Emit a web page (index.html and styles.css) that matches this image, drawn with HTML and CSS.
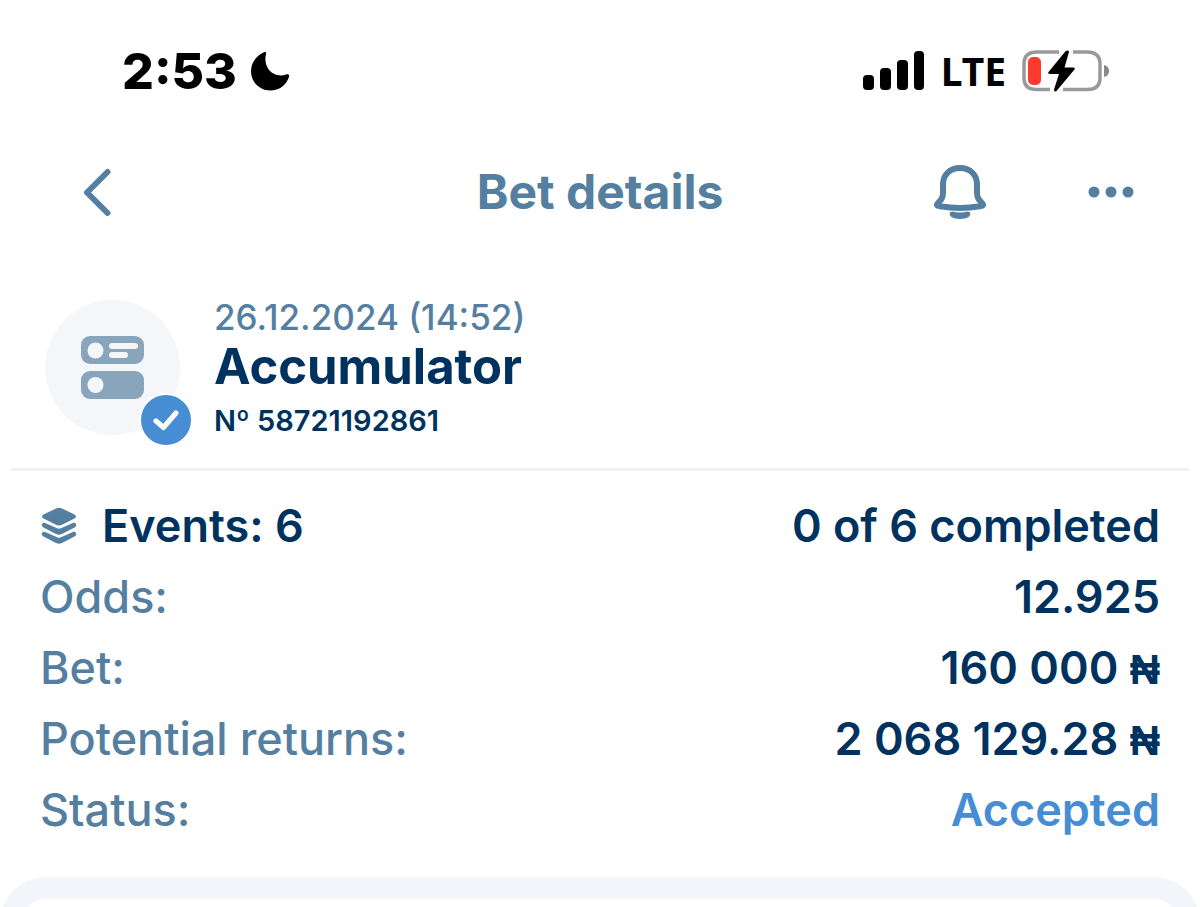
FILE: index.html
```html
<!DOCTYPE html>
<html lang="en">
<head>
<meta charset="utf-8">
<meta name="viewport" content="width=device-width, initial-scale=1">
<title>Bet details</title>
<link rel="stylesheet" href="styles.css">
</head>
<body>
<div class="status-bar">
  <div class="status-left">
    <span class="clock">2:53</span>
    <svg class="moon" width="40" height="40" viewBox="0 0 40 40" aria-hidden="true"><path d="M13.500 1.500C15.500 .5 16.500 1 16 3C14 11 17 19 23.500 22.500C28 25 32.500 24.800 36 23.500C38.200 22.700 39.700 23.800 39 26C36 34.500 29 39.500 20.500 39.500C9.500 39.500 1 31 1 20.500C1 12 6 5 13.500 1.500Z"/></svg>
  </div>
  <div class="status-right">
    <svg width="62" height="40" viewBox="0 0 62 40" aria-hidden="true"><rect x="0" y="24" width="11" height="15" rx="4"/><rect x="17" y="17" width="11" height="22" rx="4"/><rect x="34" y="9" width="11" height="30" rx="4"/><rect x="51" y="0" width="10" height="39" rx="4"/></svg>
    <span class="network">LTE</span>
    <svg class="battery" width="88" height="42" viewBox="0 0 88 42" aria-hidden="true"><path d="M37 2H15Q2 2 2 14V28Q2 39.500 15 39.500H28M51 2H65Q78 2 78 14V28Q78 39.500 65 39.500H41" fill="none" stroke="#999" stroke-width="3.500"/><path d="M82 15Q87 16 87 21T82 27Z" fill="#888"/><rect x="6" y="7" width="13" height="28" rx="5" fill="#ff3b30"/><path d="M43.500 1.200L26.500 22Q25.500 24 28 24H37L32 39.500Q32 42.500 34.500 41L52.500 19.500Q53.500 17.500 51 17.500H42.500L47 2Q46.500-.5 43.500 1.200Z"/></svg>
  </div>
</div>
<header class="header">
  <button class="icon-button back" type="button" aria-label="Back"><svg width="28" height="48" viewBox="0 0 28 48"><path d="M24.500 4L4 24.500L24.500 45" fill="none" stroke="currentColor" stroke-width="6" stroke-linecap="round" stroke-linejoin="round"/></svg></button>
  <h1 class="page-title">Bet details</h1>
  <div class="header-actions">
    <button class="icon-button" type="button" aria-label="Notifications"><svg width="52" height="56" viewBox="0 0 52 56"><path d="M26 4C15 4 9 12 9 20V29C9 34 7 36 4 39C2 41 3 42 6 42.300Q26 45.500 46 42.300C49 42 50 41 48 39C45 36 43 34 43 29V20C43 12 37 4 26 4Z" fill="none" stroke="currentColor" stroke-width="6" stroke-linejoin="round"/><path d="M18.500 47.500Q26 49.500 33.500 47.500C37 47.500 37 51 34.500 53C31 55.500 21 55.500 17.500 53C15 51 15 47.500 18.500 47.500Z" fill="currentColor"/></svg></button>
    <button class="icon-button" type="button" aria-label="More"><svg width="46" height="12" viewBox="0 0 46 12" fill="currentColor"><circle cx="6" cy="6" r="5.500"/><circle cx="23" cy="6" r="5.500"/><circle cx="40" cy="6" r="5.500"/></svg></button>
  </div>
</header>
<main class="content">
  <section class="summary">
    <div class="avatar">
      <svg width="64" height="64" viewBox="0 0 64 64" aria-hidden="true"><rect x="0" y="0" width="63" height="28" rx="9" fill="#88a5bb"/><rect x="0" y="35" width="63" height="28" rx="9" fill="#88a5bb"/><g fill="#f4f6fa"><circle cx="14.500" cy="14.500" r="8"/><circle cx="14.500" cy="49" r="8"/><rect x="28" y="7" width="29" height="6" rx="3"/><rect x="28" y="16" width="19" height="6" rx="3"/></g></svg>
      <span class="badge"><svg width="28" height="22" viewBox="0 0 28 22" aria-hidden="true"><path d="M4 12L11.500 18.500L24 4" fill="none" stroke="#fff" stroke-width="5" stroke-linecap="round" stroke-linejoin="round"/></svg></span>
    </div>
    <div class="summary-text">
      <p class="date">26.12.2024 (14:52)</p>
      <h2 class="bet-type">Accumulator</h2>
      <p class="number">Nº 58721192861</p>
    </div>
  </section>
  <dl class="details">
    <div class="row row-events">
      <dt><svg width="38" height="38" viewBox="0 0 37 38" fill="#557fa0" aria-hidden="true"><path d="M15.500 1.500Q18.500 0 21.500 1.500L34 7.500Q37 9.500 34 11.500L22 17.500Q18.500 19.500 15 17.500L3 11.500Q0 9.500 3 7.500Z"/><path id="layer" d="M3.500 15.500L16 21Q18.500 22.300 21 21L33.500 15.500Q38 17.500 34 20.500L21.500 27Q18.500 28.500 15.500 27L3 20.500Q-1 17.500 3.500 15.500Z"/><use href="#layer" y="9"/></svg>Events: 6</dt>
      <dd>0 of 6 completed</dd>
    </div>
    <div class="row"><dt>Odds:</dt><dd>12.925</dd></div>
    <div class="row"><dt>Bet:</dt><dd>160 000 <span class="currency">₦</span></dd></div>
    <div class="row"><dt>Potential returns:</dt><dd>2 068 129.28 <span class="currency">₦</span></dd></div>
    <div class="row"><dt>Status:</dt><dd class="accepted">Accepted</dd></div>
  </dl>
</main>
<div class="sheet-peek"><div class="sheet"></div></div>
</body>
</html>
```
FILE: styles.css
```css
* { box-sizing: border-box; }
body {
  margin: 0;
  min-height: 100vh;
  display: flex;
  flex-direction: column;
  background: #fff;
  color: #003260;
  font-family: Inter, "Liberation Sans", sans-serif;
}
h1, h2, p, dl, dd { margin: 0; }
svg { display: block; flex: none; }
.status-bar {
  display: flex;
  align-items: center;
  justify-content: space-between;
  height: 142px;
  padding: 0 90px 0 122px;
  color: #000;
}
.status-left { display: flex; align-items: center; gap: 13px; }
.status-right { display: flex; align-items: center; gap: 16px; }
.clock { font-size: 50px; font-weight: 800; line-height: 62px; }
.network { font-family: "Noto Sans", sans-serif; font-size: 39px; font-weight: 700; line-height: 60px; }
.header {
  display: grid;
  grid-template-columns: 1fr auto 1fr;
  align-items: center;
  height: 100px;
  padding: 0 66px;
  color: #557fa0;
}
.page-title { font-size: 48px; font-weight: 700; line-height: 62px; }
.icon-button {
  justify-self: start;
  padding: 0;
  border: 0;
  background: none;
  color: inherit;
}
.back { margin-left: 17px; }
.header-actions {
  display: flex;
  align-items: center;
  justify-content: flex-end;
  gap: 102px;
}
.summary {
  display: flex;
  gap: 34px;
  margin: 0 11px;
  padding: 56px 34px 24px;
  border-bottom: 3px solid #f0f1f4;
}
.avatar {
  position: relative;
  display: grid;
  place-items: center;
  width: 135px;
  height: 135px;
  margin-top: 2px;
  border-radius: 50%;
  background: #f4f6fa;
}
.badge {
  position: absolute;
  right: -13px;
  bottom: -12px;
  display: grid;
  place-items: center;
  width: 54px;
  height: 54px;
  border: 2px solid #fff;
  border-radius: 50%;
  background: #478dd3;
}
.date { color: #557fa0; font-size: 35px; font-weight: 500; line-height: 38px; }
.bet-type { font-size: 49px; font-weight: 700; line-height: 62px; }
.number { font-size: 29px; font-weight: 600; line-height: 46px; }
.details { padding: 19px 40px 0; }
.row {
  display: flex;
  align-items: center;
  justify-content: space-between;
  height: 71px;
  font-size: 45px;
  line-height: 56px;
}
.row dt {
  display: flex;
  align-items: center;
  gap: 24px;
  color: #557fa0;
  font-weight: 500;
}
.row dd { font-weight: 600; }
.row-events dt { color: inherit; font-weight: 600; }
.row .accepted { color: #478dd3; }
.currency { font-family: "Liberation Sans", sans-serif; font-size: 42px; font-weight: 700; line-height: 1; }
.sheet-peek {
  flex: 1 0 30px;
  margin-top: 32px;
  overflow: hidden;
}
.sheet {
  height: 100px;
  margin-bottom: -70px;
  border: 22px solid #f3f5fa;
  border-bottom: 0;
  border-radius: 46px 46px 0 0;
}
```
